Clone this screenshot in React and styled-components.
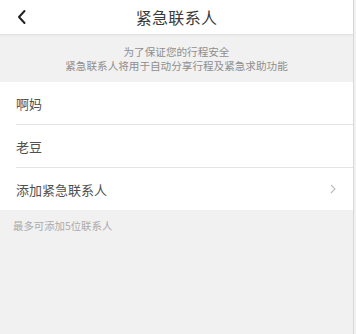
import styled, { createGlobalStyle } from 'styled-components'

const GlobalStyle = createGlobalStyle`
    html, body {
        margin: 0;
        padding: 0;
        background: #f1f1f1;
    }
    body {
        font-family: "Noto Sans CJK SC", "Noto Sans", sans-serif;
    }
`

const Page = styled.div`
    width: 353px;
    height: 334px;
    background: #f1f1f1;
    border-right: 1px solid #d8d8d8;
    display: flex;
    flex-direction: column;
`

const Header = styled.div`
    height: 34px;
    background: #fff;
    display: grid;
    grid-template-columns: 44px 1fr 44px;
    align-items: center;
    border-bottom: 1px solid #e2e2e2;
    box-shadow: 0 1px 2px rgba( 0, 0, 0, 0.04 );
`

const BackButton = styled.div`
    display: flex;
    align-items: center;
    justify-content: center;
    padding-right: 1px;
`

const Title = styled.div`
    text-align: center;
    font-size: 16px;
    color: #3a3a3a;
    letter-spacing: 0.3px;
`

const Notice = styled.div`
    height: 46px;
    display: flex;
    flex-direction: column;
    align-items: center;
    justify-content: center;
    font-size: 10.6px;
    line-height: 14px;
    color: #8e8e8e;
    padding-top: 1px;
`

const List = styled.div`
    background: #fff;
    display: flex;
    flex-direction: column;
`

const Row = styled.div`
    height: 42px;
    display: flex;
    align-items: center;
    justify-content: space-between;
    margin-left: 16px;
    padding-right: 17px;
    font-size: 13px;
    color: #505050;
    border-top: ${ ( { $first } ) => $first ? `none` : `1px solid #e4e4e4` };
`

const Hint = styled.div`
    padding: 8px 13px;
    font-size: 10.4px;
    color: #ababab;
`

const ChevronLeft = () => <svg width="12" height="16" viewBox="0 0 12 16">
    <path d="M8.5 2 L3 8 L8.5 14" fill="none" stroke="#222" strokeWidth="2" strokeLinecap="round" strokeLinejoin="round" />
</svg>

const ChevronRight = () => <svg width="6" height="10" viewBox="0 0 6 10">
    <path d="M1 1 L5 5 L1 9" fill="none" stroke="#bdbdbd" strokeWidth="1.1" />
</svg>

const contacts = [ `啊妈`, `老豆` ]

export default function App() {

    return <Page>
        <GlobalStyle />

        <Header>
            <BackButton><ChevronLeft /></BackButton>
            <Title>紧急联系人</Title>
            <div />
        </Header>

        <Notice>
            <div>为了保证您的行程安全</div>
            <div>紧急联系人将用于自动分享行程及紧急求助功能</div>
        </Notice>

        <List>
            { contacts.map( ( name, i ) => <Row key={ name } $first={ i === 0 }>{ name }</Row> ) }
            <Row>
                添加紧急联系人
                <ChevronRight />
            </Row>
        </List>

        <Hint>最多可添加5位联系人</Hint>
    </Page>

}
